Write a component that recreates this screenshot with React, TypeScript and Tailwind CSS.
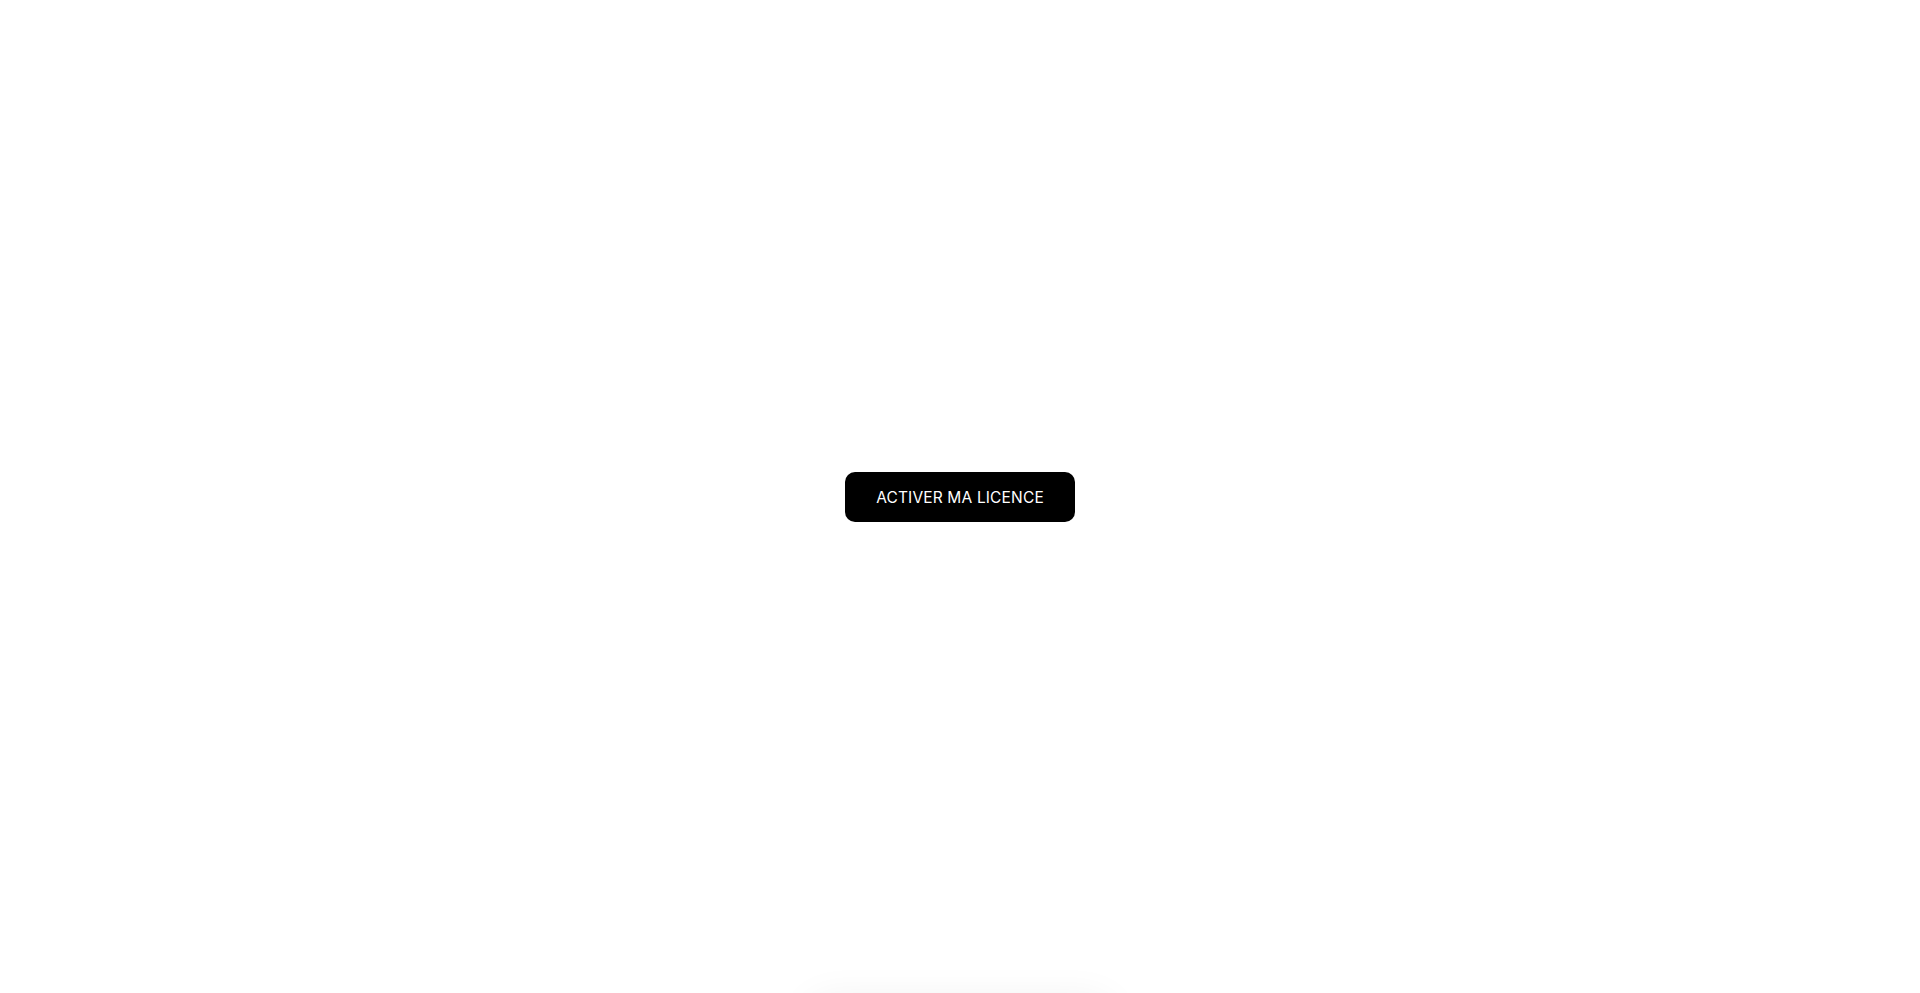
export default function App() {
  return (
    <div className="min-h-screen bg-white font-['Inter',sans-serif]">
      {/* Hero: activation call to action */}
      <section className="flex h-screen items-center justify-center">
        <button
          type="button"
          className="flex h-[50px] w-[230px] items-center justify-center rounded-[10px] bg-black pt-[3px] text-[15.5px] font-normal tracking-[0.01em] text-white"
        >
          ACTIVER MA LICENCE
        </button>
      </section>

      {/* Card that starts just below the fold */}
      <section className="flex justify-center pb-20">
        <div className="mt-2 h-[300px] w-[300px] rounded-2xl bg-white shadow-[0_0_40px_rgba(0,0,0,0.07)]" />
      </section>
    </div>
  );
}
